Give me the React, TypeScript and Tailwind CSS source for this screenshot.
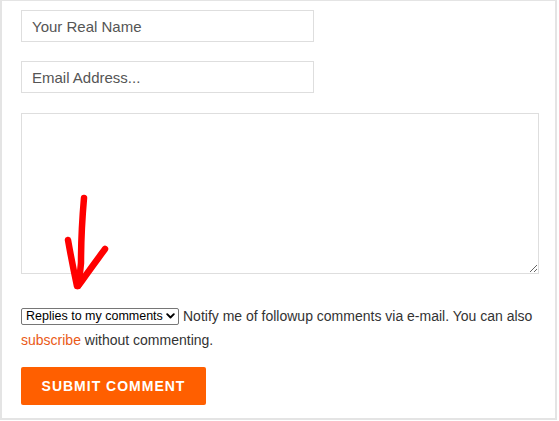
import React from 'react';

const HandArrow: React.FC = () => (
  <svg
    className="absolute left-0 top-0 pointer-events-none"
    width="120"
    height="300"
    viewBox="0 0 120 300"
    fill="none"
  >
    <g stroke="#ff0000" strokeWidth={6.5} strokeLinecap="round" strokeLinejoin="round">
      <path d="M82 197 C 80 220, 79 245, 79 262 C 78 273, 77 280, 76 285" />
      <path d="M66 239 C 69 256, 72 271, 75 285" />
      <path d="M103 248 C 95 259, 86 271, 77 284" />
    </g>
  </svg>
);

const App: React.FC = () => {
  return (
    <div className="w-[559px] h-[421px] bg-white">
      <div className="relative w-[557px] h-[420px] border-x-2 border-b-2 border-t border-[#e4e4e4] pl-[19px] pt-[9px] font-['Liberation_Sans',Arial,sans-serif]">
        <div className="flex flex-col">
          <input
            type="text"
            placeholder="Your Real Name"
            className="w-[293px] h-[32px] border border-[#dedede] px-[10px] text-[15px] text-[#555] placeholder:text-[#555] outline-none"
          />
          <input
            type="email"
            placeholder="Email Address..."
            className="mt-[19px] w-[293px] h-[32px] border border-[#dedede] px-[10px] text-[15px] text-[#555] placeholder:text-[#555] outline-none"
          />
          <textarea className="mt-[20px] w-[518px] h-[161px] border border-[#dedede] outline-none block" />
        </div>

        <p className="mt-[30px] w-[520px] text-[14px] leading-[24px] text-[#333]">
          <span className="relative inline-block align-[1px] mr-[4px]">
            <select className="appearance-none block w-[158px] h-[17px] pl-[4px] pr-[12px] border border-[#767676] rounded-[2px] bg-white text-[12.5px] text-black leading-[15px]">
              <option>Replies to my comments</option>
            </select>
            <svg
              className="absolute right-[4px] top-[5px] pointer-events-none"
              width="9"
              height="6"
              viewBox="0 0 9 6"
              fill="none"
            >
              <path d="M1.2 1.2 L4.5 4.5 L7.8 1.2" stroke="#000" strokeWidth={1.9} strokeLinecap="round" strokeLinejoin="round" />
            </svg>
          </span>
          Notify me of followup comments via e-mail. You can also{' '}
          <a href="#" className="text-[#ea5a17]">subscribe</a> without commenting.
        </p>

        <button className="mt-[15px] w-[185px] h-[38px] rounded-[2px] bg-[#ff5f00] text-white text-[14px] font-bold tracking-[1px] uppercase">
          Submit Comment
        </button>

        <HandArrow />
      </div>
    </div>
  );
};

export default App;
